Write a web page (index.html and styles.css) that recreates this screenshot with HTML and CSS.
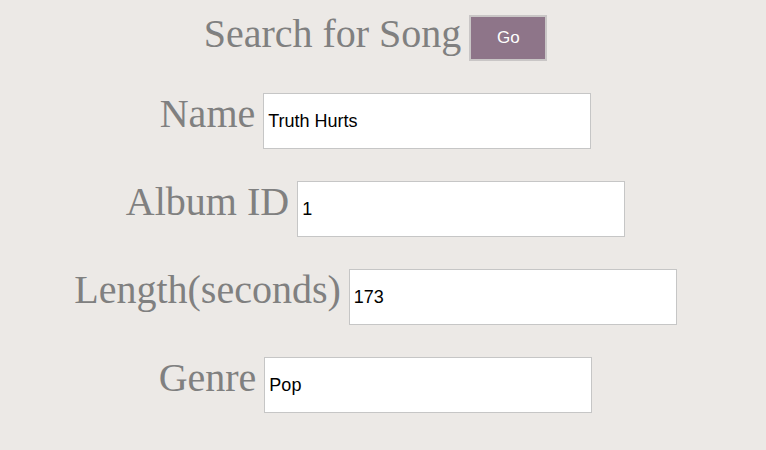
FILE: index.html
```html
<!DOCTYPE html>
<html>
<head>
<meta charset="utf-8">
<link rel="stylesheet" href="styles.css">
</head>
<body>
<div class="page">
  <div class="heading-row">
    <span class="heading">Search for Song</span>
    <button class="go-btn">Go</button>
  </div>
  <div class="field-row">
    <label class="label">Name</label>
    <input class="field" type="text" value="Truth Hurts">
  </div>
  <div class="field-row">
    <label class="label">Album ID</label>
    <input class="field" type="text" value="1">
  </div>
  <div class="field-row">
    <label class="label">Length(seconds)</label>
    <input class="field" type="text" value="173">
  </div>
  <div class="field-row">
    <label class="label">Genre</label>
    <input class="field" type="text" value="Pop">
  </div>
</div>
</body>
</html>
```
FILE: styles.css
```css
html, body {
  margin: 0;
  padding: 0;
  background: #ece9e6;
}
.page {
  display: flex;
  flex-direction: column;
  align-items: center;
  padding: 15px 15px 0 0;
  gap: 32px;
}
.heading-row {
  display: flex;
  align-items: center;
  gap: 8px;
  height: 46px;
}
.heading {
  font-family: "Liberation Serif", serif;
  font-size: 40px;
  color: #808080;
  line-height: 46px;
  margin-top: -9px;
}
.go-btn {
  width: 78px;
  height: 46px;
  background: #8e7589;
  border: 2px solid #c9c6c6;
  color: #fff;
  font-family: "Liberation Sans", sans-serif;
  font-size: 17px;
  padding: 0;
  margin: 0;
}
.field-row {
  display: flex;
  align-items: baseline;
  gap: 8px;
  height: 56px;
}
.label {
  font-family: "Liberation Serif", serif;
  font-size: 40px;
  line-height: 1;
  color: #808080;
}
.field {
  box-sizing: border-box;
  width: 328px;
  height: 56px;
  border: 1px solid #c6c6c6;
  background: #fff;
  padding: 0 4px;
  margin: 0;
  font-family: "Liberation Sans", sans-serif;
  font-size: 18px;
  color: #000;
  outline: none;
}
```
